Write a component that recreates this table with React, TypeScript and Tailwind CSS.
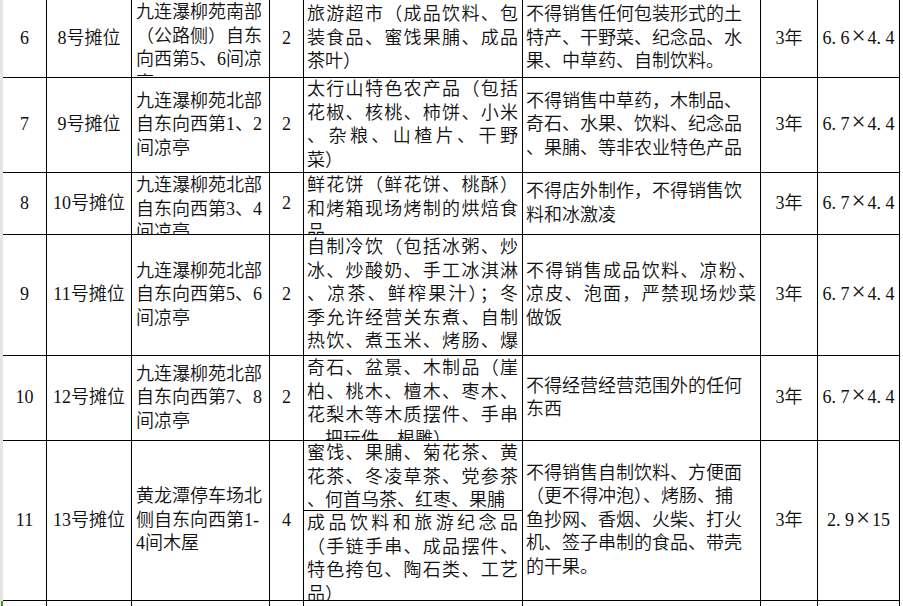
type Block = { lines: string[]; top?: boolean; justify?: boolean }

type Row = {
  no: string
  stall: string
  place: Block
  count: string
  scope: Block[]
  ban: Block
  years: string
  size: string
  h: string
}

const rows: Row[] = [
  {
    no: '6',
    stall: '8号摊位',
    place: { lines: ['九连瀑柳苑南部', '（公路侧）自东', '向西第5、6间凉', '亭'], top: true },
    count: '2',
    scope: [{ lines: ['旅游超市（成品饮料、包', '装食品、蜜饯果脯、成品', '茶叶）'], justify: true }],
    ban: { lines: ['不得销售任何包装形式的土', '特产、干野菜、纪念品、水', '果、中草药、自制饮料。'] },
    years: '3年',
    size: '6.6×4.4',
    h: 'h-[78px]',
  },
  {
    no: '7',
    stall: '9号摊位',
    place: { lines: ['九连瀑柳苑北部', '自东向西第1、2', '间凉亭'] },
    count: '2',
    scope: [
      {
        lines: ['太行山特色农产品（包括', '花椒、核桃、柿饼、小米', '、杂粮、山楂片、干野', '菜）'],
        justify: true,
      },
    ],
    ban: { lines: ['不得销售中草药，木制品、', '奇石、水果、饮料、纪念品', '、果脯、等非农业特色产品'] },
    years: '3年',
    size: '6.7×4.4',
    h: 'h-[96px]',
  },
  {
    no: '8',
    stall: '10号摊位',
    place: { lines: ['九连瀑柳苑北部', '自东向西第3、4', '间凉亭'], top: true },
    count: '2',
    scope: [{ lines: ['鲜花饼（鲜花饼、桃酥）', '和烤箱现场烤制的烘焙食', '品'], top: true, justify: true }],
    ban: { lines: ['不得店外制作，不得销售饮', '料和冰激凌'] },
    years: '3年',
    size: '6.7×4.4',
    h: 'h-[62px]',
  },
  {
    no: '9',
    stall: '11号摊位',
    place: { lines: ['九连瀑柳苑北部', '自东向西第5、6', '间凉亭'] },
    count: '2',
    scope: [
      {
        lines: [
          '自制冷饮（包括冰粥、炒',
          '冰、炒酸奶、手工冰淇淋',
          '、凉茶、鲜榨果汁）；冬',
          '季允许经营关东煮、自制',
          '热饮、煮玉米、烤肠、爆',
          '米花）',
        ],
        top: true,
        justify: true,
      },
    ],
    ban: { lines: ['不得销售成品饮料、凉粉、', '凉皮、泡面，严禁现场炒菜', '做饭'], justify: true },
    years: '3年',
    size: '6.7×4.4',
    h: 'h-[121px]',
  },
  {
    no: '10',
    stall: '12号摊位',
    place: { lines: ['九连瀑柳苑北部', '自东向西第7、8', '间凉亭'] },
    count: '2',
    scope: [
      {
        lines: ['奇石、盆景、木制品（崖', '柏、桃木、檀木、枣木、', '花梨木等木质摆件、手串', '、把玩件、根雕）'],
        top: true,
        justify: true,
      },
    ],
    ban: { lines: ['不得经营经营范围外的任何', '东西'] },
    years: '3年',
    size: '6.7×4.4',
    h: 'h-[85px]',
  },
  {
    no: '11',
    stall: '13号摊位',
    place: { lines: ['黄龙潭停车场北', '侧自东向西第1-', '4间木屋'] },
    count: '4',
    scope: [
      { lines: ['蜜饯、果脯、菊花茶、黄', '花茶、冬凌草茶、党参茶', '、何首乌茶、红枣、果脯'], top: true, justify: true },
      { lines: ['成品饮料和旅游纪念品', '（手链手串、成品摆件、', '特色挎包、陶石类、工艺', '品）'], top: true, justify: true },
    ],
    ban: {
      lines: [
        '不得销售自制饮料、方便面',
        '（更不得冲泡）、烤肠、捕',
        '鱼抄网、香烟、火柴、打火',
        '机、签子串制的食品、带壳',
        '的干果。',
      ],
    },
    years: '3年',
    size: '2.9×15',
    h: 'h-[160px]',
  },
]

function Lines({ block }: { block: Block }) {
  return (
    <>
      {block.lines.map((l, i) => (
        <div
          key={i}
          className={block.justify && i < block.lines.length - 1 ? 'text-justify [text-align-last:justify]' : ''}
        >
          {l}
        </div>
      ))}
    </>
  )
}

// SimSun-like half-width spacing for sizes such as 6.6×4.4
function Size({ text }: { text: string }) {
  return (
    <span className="whitespace-nowrap">
      {text.split('').map((c, i) =>
        c === '.' ? (
          <span key={i} className="inline-block w-[9px] text-left">.</span>
        ) : c === '×' ? (
          <span key={i} className="inline-block w-[18px] text-center text-[25px] leading-[18px] font-light">×</span>
        ) : (
          <span key={i}>{c}</span>
        )
      )}
    </span>
  )
}

const center = 'flex items-center justify-center border-r border-b border-black'

export default function App() {
  return (
    <div className="flex h-[606px] w-[903px] overflow-hidden bg-white text-[18px] leading-[23.5px] text-[#111] font-[350] [font-family:'Liberation_Serif','Noto_Sans_CJK_SC',serif]">
      {/* row header edge */}
      <div className="flex w-[3px] flex-col">
        <div className="flex-1 bg-[#e4e4e4]"></div>
        <div className="flex h-[5px]">
          <div className="w-[1px] bg-[#e4e4e4]"></div>
          <div className="flex-1 bg-[#3f9a2c]"></div>
        </div>
      </div>

      <div className="flex w-[897px] flex-col">
        {rows.map((r) => (
          <div key={r.no} className={`grid grid-cols-[44px_85px_138px_34px_219px_238px_57px_82px] ${r.h}`}>
            <div className={center}>{r.no}</div>
            <div className={center}>{r.stall}</div>
            <div
              className={`flex flex-col overflow-hidden border-r border-b border-black pl-[4px] ${
                r.place.top ? 'justify-start pt-[1px]' : 'justify-center'
              }`}
            >
              <Lines block={r.place} />
            </div>
            <div className={center}>{r.count}</div>
            <div className="flex flex-col overflow-hidden border-r border-b border-black">
              {r.scope.map((b, i) => (
                <div
                  key={i}
                  className={`flex flex-col overflow-hidden pl-[3px] pr-[4px] ${
                    b.top ? 'justify-start pt-[1px]' : 'justify-center'
                  } ${r.scope.length > 1 && i === 0 ? 'h-[70px] shrink-0 border-b border-black' : 'flex-1'}`}
                >
                  <Lines block={b} />
                </div>
              ))}
            </div>
            <div className="flex flex-col justify-center overflow-hidden border-r border-b border-black pl-[3px] pr-[4px]">
              <Lines block={r.ban} />
            </div>
            <div className={center}>{r.years}</div>
            <div className={center}>
              <Size text={r.size} />
            </div>
          </div>
        ))}
        {/* next row, cut off */}
        <div className="grid h-[10px] grid-cols-[44px_85px_138px_34px_219px_238px_57px_82px]">
          <div className="border-r border-black"></div>
          <div className="border-r border-black"></div>
          <div className="border-r border-black"></div>
          <div className="border-r border-black"></div>
          <div className="border-r border-black"></div>
          <div className="border-r border-black"></div>
          <div className="border-r border-black"></div>
          <div className="border-r border-black"></div>
        </div>
      </div>

      <div className="w-[3px]"></div>
    </div>
  )
}
